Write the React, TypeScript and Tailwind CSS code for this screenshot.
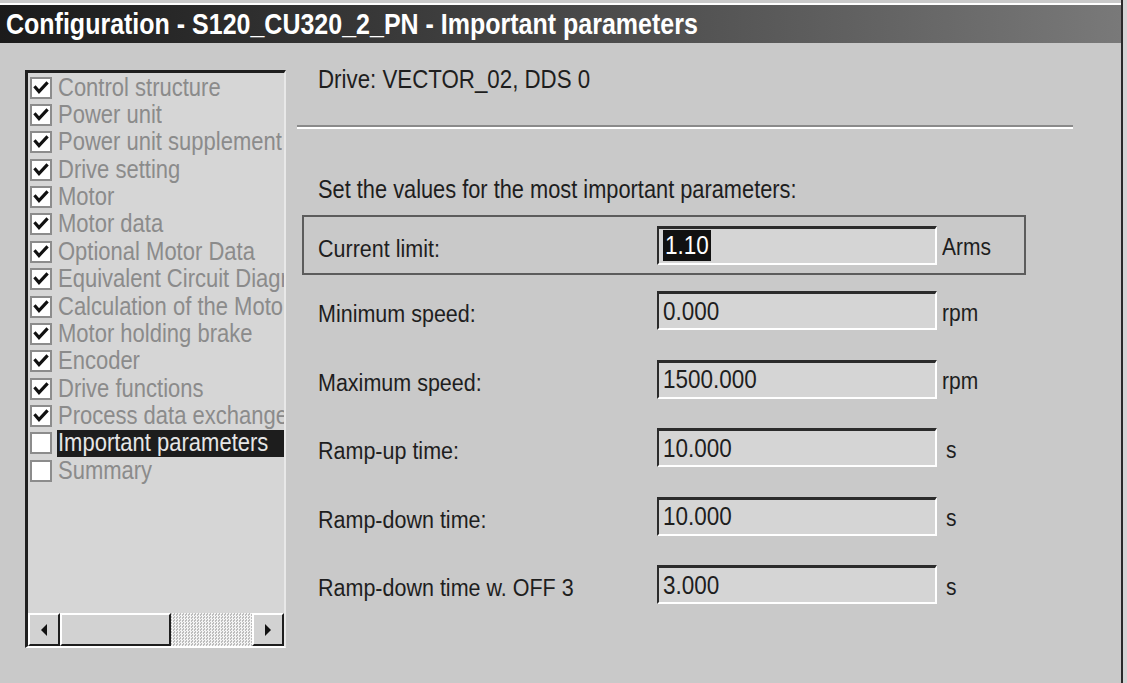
import React from 'react';

const steps = [
  'Control structure',
  'Power unit',
  'Power unit supplement',
  'Drive setting',
  'Motor',
  'Motor data',
  'Optional Motor Data',
  'Equivalent Circuit Diagram',
  'Calculation of the Motor data',
  'Motor holding brake',
  'Encoder',
  'Drive functions',
  'Process data exchange',
  'Important parameters',
  'Summary',
];

const params = [
  { label: 'Minimum speed:', value: '0.000', unit: 'rpm' },
  { label: 'Maximum speed:', value: '1500.000', unit: 'rpm' },
  { label: 'Ramp-up time:', value: '10.000', unit: 's' },
  { label: 'Ramp-down time:', value: '10.000', unit: 's' },
  { label: 'Ramp-down time w. OFF 3', value: '3.000', unit: 's' },
];

const Tall = ({ children, className = '' }: { children: React.ReactNode; className?: string }) => (
  <span className={`inline-block scale-y-[1.15] whitespace-nowrap ${className}`}>{children}</span>
);

const CheckBox = ({ checked }: { checked: boolean }) => (
  <div className="w-[22px] h-[22px] shrink-0 border-2 border-[#8c8c8c] bg-white flex items-center justify-center">
    {checked && (
      <svg width="16" height="16" viewBox="0 0 16 16">
        <polyline points="2.5,7.5 6,11.5 13.5,3.5" fill="none" stroke="#111" strokeWidth="3.2" strokeLinecap="square" />
      </svg>
    )}
  </div>
);

const ValueBox = ({ value, selected }: { value: string; selected?: boolean }) => (
  <div className="w-[280px] h-[39px] shrink-0 bg-[#d5d5d5] border-t-[3px] border-l-2 border-b-2 border-r-2 border-t-[#2b2b2b] border-l-[#2b2b2b] border-b-white border-r-white flex items-center pl-[4px]">
    <Tall className={`text-[22.5px] leading-[27px] ${selected ? 'bg-[#111] text-white px-[2px]' : 'text-[#1e1e1e]'}`}>{value}</Tall>
  </div>
);

const ScrollButton = ({ dir }: { dir: 'left' | 'right' }) => (
  <div className="w-[32px] h-full shrink-0 bg-[#d2d2d2] border-t-2 border-l-2 border-t-white border-l-white border-b-2 border-r-2 border-b-[#1e1e1e] border-r-[#1e1e1e] flex items-center justify-center">
    <svg width="8" height="12" viewBox="0 0 8 12">
      {dir === 'left' ? <polygon points="7,0 7,12 1,6" fill="#111" /> : <polygon points="1,0 1,12 7,6" fill="#111" />}
    </svg>
  </div>
);

export default function App() {
  return (
    <div className="w-[1127px] h-[683px] bg-[#c9c9c9] flex overflow-hidden font-['Liberation_Sans',Arial,sans-serif]">
      <div className="w-[1123px] h-full border-r-2 border-[#2a2a2a] flex flex-col pt-[3px]">
        <div className="h-[2px] bg-white" />
        {/* title bar */}
        <div className="h-[38px] bg-gradient-to-r from-[#1b1b1b] to-[#797979] flex items-center pl-[6px]">
          <Tall className="text-white font-bold text-[25px] scale-y-[1.08] leading-none">
            Configuration - S120_CU320_2_PN - Important parameters
          </Tall>
        </div>

        <div className="flex flex-1">
          {/* step list */}
          <div className="pl-[25px] pt-[27px]">
            <div className="w-[261px] h-[578px] bg-[#d6d6d6] border-t-[3px] border-l-[3px] border-t-[#1f1f1f] border-l-[#1f1f1f] border-b-2 border-r-2 border-b-white border-r-[#e8e8e8] flex flex-col overflow-hidden">
              <div className="pt-[1px] flex-1">
                {steps.map((s, i) => {
                  const sel = i === 13;
                  return (
                    <div key={s} className="h-[27.36px] flex items-center pl-[2px]">
                      <CheckBox checked={i < 13} />
                      <div className={`ml-[5px] h-full flex-1 flex items-center overflow-hidden ${sel ? 'bg-[#1d1d1d]' : ''}`}>
                        <Tall className={`text-[22px] leading-[26px] pl-[1px] ${sel ? 'text-[#e6e6e6]' : 'text-[#8b8b8b]'}`}>{s}</Tall>
                      </div>
                    </div>
                  );
                })}
              </div>
              {/* horizontal scrollbar */}
              <div className="h-[33px] flex">
                <ScrollButton dir="left" />
                <div className="w-[111px] h-full shrink-0 bg-[#d2d2d2] border-t-2 border-l-2 border-t-white border-l-white border-b-2 border-r-2 border-b-[#1e1e1e] border-r-[#1e1e1e]" />
                <div className="flex-1 h-full bg-[repeating-conic-gradient(#f4f4f4_0_25%,#bdbdbd_0_50%)] bg-[length:3px_3px]" />
                <ScrollButton dir="right" />
              </div>
            </div>
          </div>

          {/* parameters */}
          <div className="flex-1 flex flex-col pl-[11px]">
            <div className="mt-[24px] pl-[21px] h-[26px] flex items-center">
              <Tall className="text-[22.3px] text-[#1e1e1e]">Drive: VECTOR_02, DDS 0</Tall>
            </div>
            <div className="mt-[32px] w-[776px] border-t-2 border-t-[#8a8a8a] border-b-2 border-b-white" />
            <div className="mt-[48px] pl-[21px] h-[26px] flex items-center">
              <Tall className="text-[21.8px] text-[#1e1e1e]">Set the values for the most important parameters:</Tall>
            </div>

            <div className="mt-[12px] ml-[5px] w-[724px] h-[60px] border-2 border-[#5c5c5c] flex items-center pl-[14px]">
              <div className="w-[339px] pt-[8px]">
                <Tall className="text-[21.5px] text-[#1e1e1e]">Current limit:</Tall>
              </div>
              <ValueBox value="1.10" selected />
              <div className="pl-[5px] pt-[3px]">
                <Tall className="text-[21px] text-[#1e1e1e]">Arms</Tall>
              </div>
            </div>

            <div className="mt-[16px] flex flex-col gap-[29.5px] pl-[21px]">
              {params.map(p => (
                <div key={p.label} className="h-[39px] flex items-center">
                  <div className="w-[339px] pt-[8px]">
                    <Tall className="text-[21.5px] text-[#1e1e1e]">{p.label}</Tall>
                  </div>
                  <ValueBox value={p.value} />
                  <div className={`${p.unit === 's' ? 'pl-[9px]' : 'pl-[5px]'} pt-[4px]`}>
                    <Tall className="text-[21px] text-[#1e1e1e]">{p.unit}</Tall>
                  </div>
                </div>
              ))}
            </div>
          </div>
        </div>
      </div>
      <div className="flex-1 bg-[#d4d4d4]" />
    </div>
  );
}
